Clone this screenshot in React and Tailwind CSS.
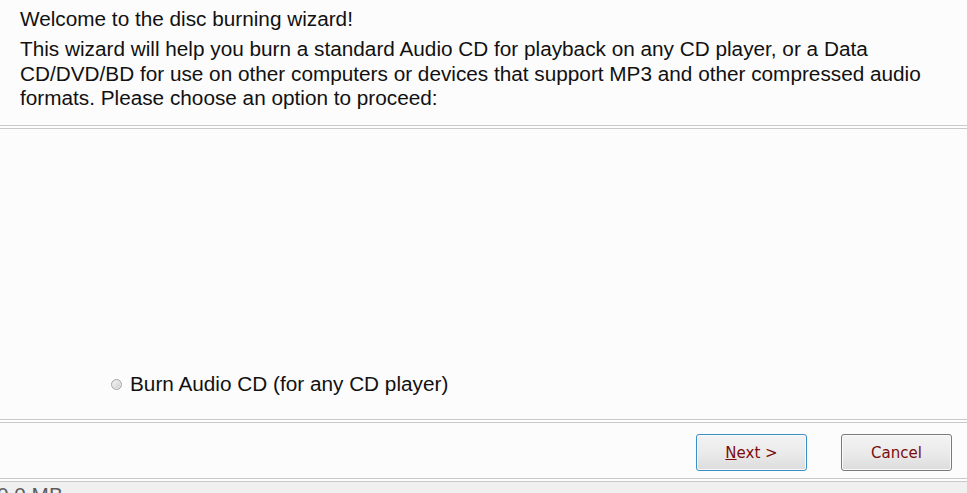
import React from "react";

const DoubleRule = () => (
    <div className="h-[4px] shrink-0 border-t border-b border-[#c9c9c9] bg-[#fdfdfd]" />
);

const WizardButton = ({ children, focused }) => (
    <button
        className={`w-[111px] h-[37px] pt-[2px] rounded-[3px] border text-[15px] text-[#7b0c0c] bg-gradient-to-b from-[#f3f3f3] via-[#ebebeb] to-[#dcdcdc] shadow-[inset_0_0_0_1px_#fafafa] ${
            focused ? "border-[#3d8ec5]" : "border-[#7a7a7a]"
        }`}
        style={{ fontFamily: "Tahoma, 'DejaVu Sans', sans-serif" }}
    >
        {children}
    </button>
);

export default function App() {
    return (
        <div
            className="w-[967px] h-[493px] flex flex-col bg-[#fcfcfc] text-[#111] overflow-hidden"
            style={{ fontFamily: "'Liberation Sans', Arial, sans-serif" }}
        >
            {/* intro */}
            <div className="h-[125px] shrink-0 pl-[20px] pt-[7px]">
                <h1 className="text-[20.75px] leading-[24px]">
                    Welcome to the disc burning wizard!
                </h1>
                <p className="mt-[6px] text-[20.75px] leading-[24.5px]">
                    This wizard will help you burn a standard Audio CD for playback on any CD player, or a Data
                    <br />
                    CD/DVD/BD for use on other computers or devices that support MP3 and other compressed audio
                    <br />
                    formats. Please choose an option to proceed:
                </p>
            </div>
            <DoubleRule />

            {/* options */}
            <div className="flex-1 flex flex-col justify-end pl-[111px] pb-[23px]">
                <label className="flex items-center gap-[8px] text-[20.75px] leading-[24px]">
                    <span className="w-[11px] h-[11px] shrink-0 rounded-full border border-[#a5a5a5] bg-gradient-to-br from-[#f6f6f6] to-[#cdcdcd] shadow-[inset_0_0_0_1px_#e8e8e8]" />
                    Burn Audio CD (for any CD player)
                </label>
            </div>
            <DoubleRule />

            {/* buttons */}
            <div className="h-[55px] shrink-0 flex items-start justify-end gap-[34px] pr-[15px] pt-[11px]">
                <WizardButton focused>
                    <span className="underline">N</span>ext &gt;
                </WizardButton>
                <WizardButton>Cancel</WizardButton>
            </div>
            <DoubleRule />

            {/* status bar */}
            <div className="h-[11px] shrink-0 bg-[#f0f0f0] -ml-[3px] pt-[1px] text-[20.75px] leading-[24px] text-[#5d5d5d]">
                0.0 MB
            </div>
        </div>
    );
}
